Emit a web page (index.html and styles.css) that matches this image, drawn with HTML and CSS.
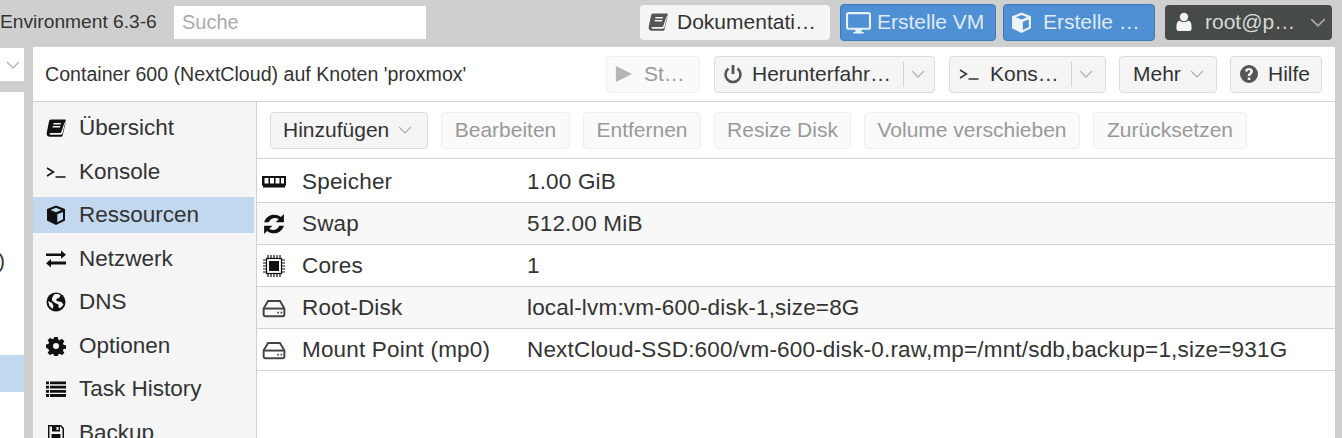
FILE: index.html
```html
<!DOCTYPE html>
<html lang="de">
<head>
    <meta charset="UTF-8">
    <title>proxmox - Proxmox Virtual Environment</title>
    <link rel="stylesheet" href="styles.css">
</head>
<body>
    <svg class="defs" xmlns="http://www.w3.org/2000/svg">
        <symbol id="i-book" viewBox="0 0 20 20"><path d="M5 1.500h14c.6 0 .9.500.7 1.100L16.500 15.500c-.2.800-.7 1.200-1.600 1.200H4.500c-1.300 0-1.300-1.700 0-1.700h9.500c.7 0 1.100-.3 1.300-.9L18.500 4.500l1 .7-2.900 12.200c-.2.900-.9 1.300-1.800 1.300H3.500C1.300 18.700.3 16.800.8 14.500L3 3.500C3.200 2.300 4 1.500 5 1.500zM7.500 5l-.3 1.400h7.500l.3-1.400zM6.800 8l-.3 1.400H14l.3-1.400z" fill-rule="evenodd"/></symbol>
        <symbol id="i-term" viewBox="0 0 20 20"><path d="M1 6l6.500 4L1 14" fill="none" stroke="currentColor" stroke-width="1.500"/><path d="M9.500 15h10" fill="none" stroke="currentColor" stroke-width="1.500"/></symbol>
        <symbol id="i-cube" viewBox="0 0 20 20"><path d="M10 .5l9 3.500v11.500L10 20l-9-4.500V4zM10 2.800L4.500 5 10 7.200 15.500 5zM11.300 9.300v7.900l5.700-2.900V7.100z" fill-rule="evenodd"/></symbol>
        <symbol id="i-swap" viewBox="0 0 20 20"><path d="M0 4.500h15V1.500l5 4.200-5 4.100V7H0zM20 12.500H5V10l-5 4.300 5 4.200v-3h15z"/></symbol>
        <symbol id="i-globe" viewBox="0 0 20 20"><circle cx="10" cy="10" r="9.500"/><path d="M8 2.500c2-.8 5-.5 6.500 1l-1.500 2.500-2 .5-1 2 2.500 1 3 .5 2 2.500-3 3.500-2-.5v-3L9 11 6 8.500V6z" fill="#f5f5f5"/><path d="M2 9L6 11l1.500 3-1 3-3-3z" fill="#f5f5f5"/></symbol>
        <symbol id="i-gear" viewBox="0 0 20 20"><path d="M8.200 1h3.600l.4 2.500 1.600.7 2.100-1.500 2.500 2.500-1.500 2.100.7 1.600 2.400.4v3.400l-2.400.4-.7 1.600 1.500 2.100-2.500 2.500-2.100-1.500-1.600.7-.4 2.400H8.200l-.4-2.400-1.600-.7-2.100 1.500-2.500-2.500 1.500-2.100-.7-1.600L0 11.800V8.400l2.400-.4.7-1.600L1.600 4.300l2.500-2.500 2.100 1.500 1.600-.7zM10 7a3 3 0 100 6 3 3 0 000-6z" fill-rule="evenodd"/></symbol>
        <symbol id="i-list" viewBox="0 0 20 20"><path d="M0 2.500h3v2.800H0zM4 2.500h16v2.800H4zM0 6.700h3v2.800H0zM4 6.700h16v2.800H4zM0 10.900h3v2.800H0zM4 10.900h16v2.800H4zM0 15.100h3v2.800H0zM4 15.100h16v2.800H4z"/></symbol>
        <symbol id="i-save" viewBox="0 0 20 20"><path d="M2 2h13l3 3v13H2zM3.500 3.500v13h13V5.700l-2-2.200H14v5H6v-5zM10.500 4v3H12.500V4zM5.500 11h9v5.500h-9z" fill-rule="evenodd"/></symbol>
        <symbol id="i-ram" viewBox="0 0 24 20"><path d="M0 4h24v9.500h-1v2H1v-2H0zM2.500 6v5.500h4V6zM8 6v5.500h4V6zM13.500 6v5.500h4V6zM19 6v5.500h3V6z" fill-rule="evenodd"/></symbol>
        <symbol id="i-sync" viewBox="0 0 20 20"><path d="M19 1v7.500h-7.500l2.800-2.800C11.500 3.500 7 4.300 5.200 8.500H1C3 1.500 11.200-.4 16.300 3.700zM1 19v-7.500h7.500l-2.800 2.800c2.800 2.200 7.300 1.400 9.100-2.800H19c-2 7-10.200 8.900-15.300 4.800z"/></symbol>
        <symbol id="i-cpu" viewBox="0 0 22 22"><path d="M5 0v4M8 0v4M11 0v4M14 0v4M17 0v4M5 18v4M8 18v4M11 18v4M14 18v4M17 18v4M0 5h4M0 8h4M0 11h4M0 14h4M0 17h4M18 5h4M18 8h4M18 11h4M18 14h4M18 17h4" stroke="currentColor" stroke-width="1.200"/><rect x="3.500" y="3.500" width="15" height="15" fill="none" stroke="currentColor" stroke-width="1.200"/><rect x="6" y="6" width="10" height="10"/></symbol>
        <symbol id="i-disk" viewBox="0 0 22 20"><path d="M5.500 3.500h11l4 7v5.500a1.500 1.500 0 01-1.500 1.500H3A1.500 1.500 0 011.500 16v-5.500z" fill="none" stroke="#444" stroke-width="1.800"/><path d="M2 10.500h18" stroke="#444" stroke-width="1.800"/><path d="M14 13.500h1.500v1.500H14zM17 13.500h1.500v1.500H17z" fill="#444"/></symbol>
        <symbol id="i-desktop" viewBox="0 0 24 22"><path d="M2.500 1h19C23 1 24 2 24 3.500v12c0 1.500-1 2.500-2.500 2.500H15v2h2v1.500H7V20h2v-2H2.500C1 18 0 17 0 15.500v-12C0 2 1 1 2.500 1zM2 3v13h20V3z" fill-rule="evenodd"/></symbol>
        <symbol id="i-user" viewBox="0 0 16 20"><circle cx="8" cy="5" r="4.200"/><path d="M3.500 8.500c2.500 2 6.500 2 9 0 2 .5 3 2.500 3 5.500v3c0 1.300-1 2-2 2h-11c-1 0-2-.7-2-2v-3c0-3 1-5 3-5.500z"/></symbol>
        <symbol id="i-play" viewBox="0 0 20 20"><path d="M1 1l18 9-18 9z"/></symbol>
        <symbol id="i-power" viewBox="0 0 20 20"><path d="M5.500 4.500a7.500 7.500 0 109 0" fill="none" stroke="currentColor" stroke-width="2.600"/><path d="M10 1v9" stroke="currentColor" stroke-width="2.800"/></symbol>
        <symbol id="i-help" viewBox="0 0 20 20"><path d="M10 1a9 9 0 110 18 9 9 0 010-18zM8.700 13.500v2.500h2.600v-2.500zM10 4C7.800 4 6.300 5.200 6 7.200l2.400.5c.2-1 .7-1.500 1.500-1.500s1.400.5 1.400 1.200c0 1.400-2.600 1.700-2.600 4.600h2.600c0-1.800 2.700-2.200 2.700-4.800C14 5.300 12.200 4 10 4z" fill-rule="evenodd"/></symbol>
        <symbol id="i-chev" viewBox="0 0 14 8"><path d="M1 1l6 6 6-6" fill="none" stroke="currentColor" stroke-width="1.400"/></symbol>
    </svg>

    <header class="topbar">
        <div class="brand">Environment 6.3-6</div>
        <input class="search" type="text" placeholder="Suche">
        <div class="topbar-space"></div>
        <button class="top-btn btn-doc"><svg class="ico ico-doc"><use href="#i-book"/></svg>Dokumentati…</button>
        <button class="top-btn btn-blue btn-vm"><svg class="ico ico-desktop"><use href="#i-desktop"/></svg>Erstelle VM</button>
        <button class="top-btn btn-blue btn-ct"><svg class="ico ico-ct"><use href="#i-cube"/></svg>Erstelle …</button>
        <button class="top-btn btn-dark"><svg class="ico ico-user"><use href="#i-user"/></svg>root@p…<svg class="chev chev-dark"><use href="#i-chev"/></svg></button>
    </header>

    <div class="main">
        <aside class="tree-col">
            <div class="view-select"><svg class="chev"><use href="#i-chev"/></svg></div>
            <div class="tree">
                <div class="tree-text">)</div>
                <div class="tree-sel"></div>
            </div>
        </aside>

        <section class="panel">
            <div class="panel-head">
                <div class="panel-title">Container 600 (NextCloud) auf Knoten 'proxmox'</div>
                <button class="btn btn-off w-start"><svg class="ico ico-play"><use href="#i-play"/></svg>St…</button>
                <button class="btn w-shut"><svg class="ico ico-power"><use href="#i-power"/></svg>Herunterfahr…<span class="split"></span><svg class="chev"><use href="#i-chev"/></svg></button>
                <button class="btn w-cons"><svg class="ico ico-term"><use href="#i-term"/></svg>Kons…<span class="split"></span><svg class="chev"><use href="#i-chev"/></svg></button>
                <button class="btn w-more">Mehr<svg class="chev"><use href="#i-chev"/></svg></button>
                <button class="btn w-help"><svg class="ico ico-help"><use href="#i-help"/></svg>Hilfe</button>
            </div>

            <div class="panel-body">
                <nav class="side">
                    <a class="side-item"><svg class="side-ico"><use href="#i-book"/></svg>Übersicht</a>
                    <a class="side-item"><svg class="side-ico"><use href="#i-term"/></svg>Konsole</a>
                    <a class="side-item active"><svg class="side-ico"><use href="#i-cube"/></svg>Ressourcen</a>
                    <a class="side-item"><svg class="side-ico"><use href="#i-swap"/></svg>Netzwerk</a>
                    <a class="side-item"><svg class="side-ico"><use href="#i-globe"/></svg>DNS</a>
                    <a class="side-item"><svg class="side-ico"><use href="#i-gear"/></svg>Optionen</a>
                    <a class="side-item"><svg class="side-ico"><use href="#i-list"/></svg>Task History</a>
                    <a class="side-item"><svg class="side-ico"><use href="#i-save"/></svg>Backup</a>
                </nav>

                <div class="content">
                    <div class="toolbar">
                        <button class="btn w-add">Hinzufügen<svg class="chev"><use href="#i-chev"/></svg></button>
                        <button class="btn btn-off w-edit">Bearbeiten</button>
                        <button class="btn btn-off w-del">Entfernen</button>
                        <button class="btn btn-off w-resize">Resize Disk</button>
                        <button class="btn btn-off w-move">Volume verschieben</button>
                        <button class="btn btn-off w-reset">Zurücksetzen</button>
                    </div>
                    <div class="row"><svg class="row-ico"><use href="#i-ram"/></svg><span class="row-key">Speicher</span><span>1.00 GiB</span></div>
                    <div class="row alt"><svg class="row-ico"><use href="#i-sync"/></svg><span class="row-key">Swap</span><span>512.00 MiB</span></div>
                    <div class="row"><svg class="row-ico"><use href="#i-cpu"/></svg><span class="row-key">Cores</span><span>1</span></div>
                    <div class="row alt"><svg class="row-ico"><use href="#i-disk"/></svg><span class="row-key">Root-Disk</span><span>local-lvm:vm-600-disk-1,size=8G</span></div>
                    <div class="row"><svg class="row-ico"><use href="#i-disk"/></svg><span class="row-key">Mount Point (mp0)</span><span>NextCloud-SSD:600/vm-600-disk-0.raw,mp=/mnt/sdb,backup=1,size=931G</span></div>
                </div>
            </div>
        </section>
    </div>
</body>
</html>
```

FILE: styles.css
```css
* {
    margin: 0;
    padding: 0;
    box-sizing: border-box;
}

html, body {
    height: 438px;
    overflow: hidden;
}

body {
    font-family: "Liberation Sans", Arial, sans-serif;
    font-size: 21px;
    background-color: #cfcfcf;
    color: #333;
}

button {
    font-family: inherit;
}

.defs {
    display: none;
}

svg {
    fill: currentColor;
    flex: none;
}

/* top bar */
.topbar {
    display: flex;
    align-items: center;
    height: 47px;
    padding-right: 10px;
}

.brand {
    width: 174px;
    font-size: 19.200px;
    color: #333;
    white-space: nowrap;
    margin-top: -3px;
}

.search {
    width: 252px;
    height: 33px;
    border: none;
    padding-left: 8px;
    font-family: inherit;
    font-size: 20px;
    background: #fff;
    margin-top: -3px;
}

.search::placeholder {
    color: #aaa;
}

.topbar-space {
    flex: 1;
}

.top-btn {
    display: flex;
    align-items: center;
    height: 35px;
    border: 1px solid transparent;
    border-radius: 4px;
    font-size: 21px;
    white-space: nowrap;
    margin-top: -3px;
    background: #f5f5f5;
    color: #333;
}

.btn-doc {
    width: 190px;
    padding-left: 7px;
    margin-right: 10px;
}

.btn-blue {
    background: #4f8fd3;
    border-color: #3d79b8;
    color: #dfeaf6;
    height: 37px;
}

.btn-vm {
    width: 156px;
    padding-left: 5px;
    margin-right: 7px;
}

.btn-ct {
    width: 152px;
    padding-left: 7px;
    margin-right: 10px;
}

.btn-dark {
    width: 167px;
    padding-left: 7px;
    background: #464b4a;
    color: #d8d8d8;
}

.ico {
    margin-right: 9px;
}

.ico-doc {
    width: 20px;
    height: 20px;
    color: #555;
    margin-right: 9px;
}

.ico-desktop {
    width: 25px;
    height: 23px;
    color: #e8f0f8;
    margin-right: 6px;
}

.ico-ct {
    width: 21px;
    height: 21px;
    color: #eef3f9;
    margin-right: 11px;
}

.ico-user {
    width: 16px;
    height: 20px;
    color: #f4f4f4;
    margin-left: 3px;
    margin-right: 13px;
}

.chev {
    width: 14px;
    height: 8px;
    color: #b4b4b4;
    margin-left: 9px;
}

.chev-dark {
    color: #aaa;
    margin-left: 15px;
    width: 16px;
    height: 9px;
}

/* main area */
.main {
    display: flex;
    height: 391px;
    gap: 9px;
    padding-right: 7px;
}

.tree-col {
    display: flex;
    flex-direction: column;
    flex: none;
    width: 24px;
    padding-top: 1px;
    gap: 11px;
}

.view-select {
    display: flex;
    align-items: center;
    justify-content: flex-end;
    height: 33px;
    padding-right: 4px;
    background: #fff;
}

.view-select .chev {
    margin: 0;
}

.tree {
    flex: 1;
    background: #fff;
}

.tree-text {
    height: 263px;
    padding-top: 157px;
    margin-left: -2px;
    line-height: 24px;
}

.tree-sel {
    height: 37px;
    background: #c2d8ee;
}

.panel {
    flex: 1;
    min-width: 0;
    display: flex;
    flex-direction: column;
    background: #fff;
}

.panel-head {
    display: flex;
    align-items: center;
    flex: none;
    height: 55px;
    padding: 0 13px 0 12px;
    border-bottom: 1px solid #d0d0d0;
}

.panel-title {
    flex: 1;
    font-size: 19.600px;
    color: #333;
    white-space: nowrap;
}

.btn {
    display: flex;
    align-items: center;
    height: 37px;
    padding: 0 12px;
    background: #f5f5f5;
    border: 1px solid #dcdcdc;
    border-radius: 4px;
    font-size: 21px;
    color: #333;
    white-space: nowrap;
    flex: none;
}

.btn-off {
    background: #fafafa;
    border-color: #efefef;
    color: #999;
}

.panel-head .btn {
    margin-left: 14px;
    padding: 0 0 0 8px;
}

.w-start {
    width: 94px;
}

.w-shut {
    width: 221px;
}

.w-cons {
    width: 157px;
}

.panel-head .w-more {
    width: 98px;
    padding-left: 13px;
    margin-left: 13px;
}

.panel-head .w-help {
    width: 92px;
    margin-left: 13px;
}

.ico-play {
    width: 18px;
    height: 18px;
    color: #b5b5b5;
    margin-right: 11px;
}

.ico-power {
    width: 20px;
    height: 20px;
    color: #555;
    margin-right: 9px;
}

.ico-term {
    width: 22px;
    height: 20px;
    color: #333;
    margin-right: 10px;
}

.ico-help {
    width: 20px;
    height: 20px;
    color: #555;
    margin-right: 9px;
}

.split {
    width: 1px;
    height: 26px;
    background: #d4d4d4;
    margin-left: 12px;
}

.split + .chev {
    margin-left: 7px;
}

.panel-body {
    flex: 1;
    min-height: 0;
    display: flex;
}

.side {
    flex: none;
    width: 224px;
    padding-top: 8px;
    padding-right: 2px;
    background: #f5f5f5;
    border-right: 1px solid #d0d0d0;
    overflow: hidden;
}

.side-item {
    display: flex;
    align-items: center;
    height: 36px;
    margin-bottom: 7.500px;
    padding-left: 13px;
    font-size: 22.500px;
    color: #333;
}

.side-item.active {
    background: #c2d8ee;
}

.side-ico {
    width: 20px;
    height: 20px;
    margin-right: 13px;
    color: #111;
}

.content {
    flex: 1;
    min-width: 0;
}

.toolbar {
    display: flex;
    align-items: center;
    gap: 13px;
    height: 57px;
    padding-left: 13px;
    border-bottom: 1px solid #d0d0d0;
}

.toolbar .btn {
    justify-content: center;
    padding: 0;
}

.toolbar .w-add {
    justify-content: flex-start;
    padding-left: 12px;
}

.w-add {
    width: 158px;
}

.w-edit {
    width: 129px;
}

.w-del {
    width: 118px;
}

.w-resize {
    width: 137px;
}

.w-move {
    width: 216px;
}

.w-reset {
    width: 154px;
}

.row {
    display: flex;
    align-items: center;
    height: 42px;
    padding-left: 5px;
    border-bottom: 1px solid #d0d0d0;
    font-size: 22.500px;
    letter-spacing: .18px;
    color: #333;
    white-space: nowrap;
}

.row:nth-child(2) {
    height: 44px;
    padding-top: 2px;
}

.row.alt {
    background: #f8f8f8;
}

.row-ico {
    width: 24px;
    height: 22px;
    color: #111;
    margin-right: 16px;
}

.row-key {
    width: 225px;
}
```
